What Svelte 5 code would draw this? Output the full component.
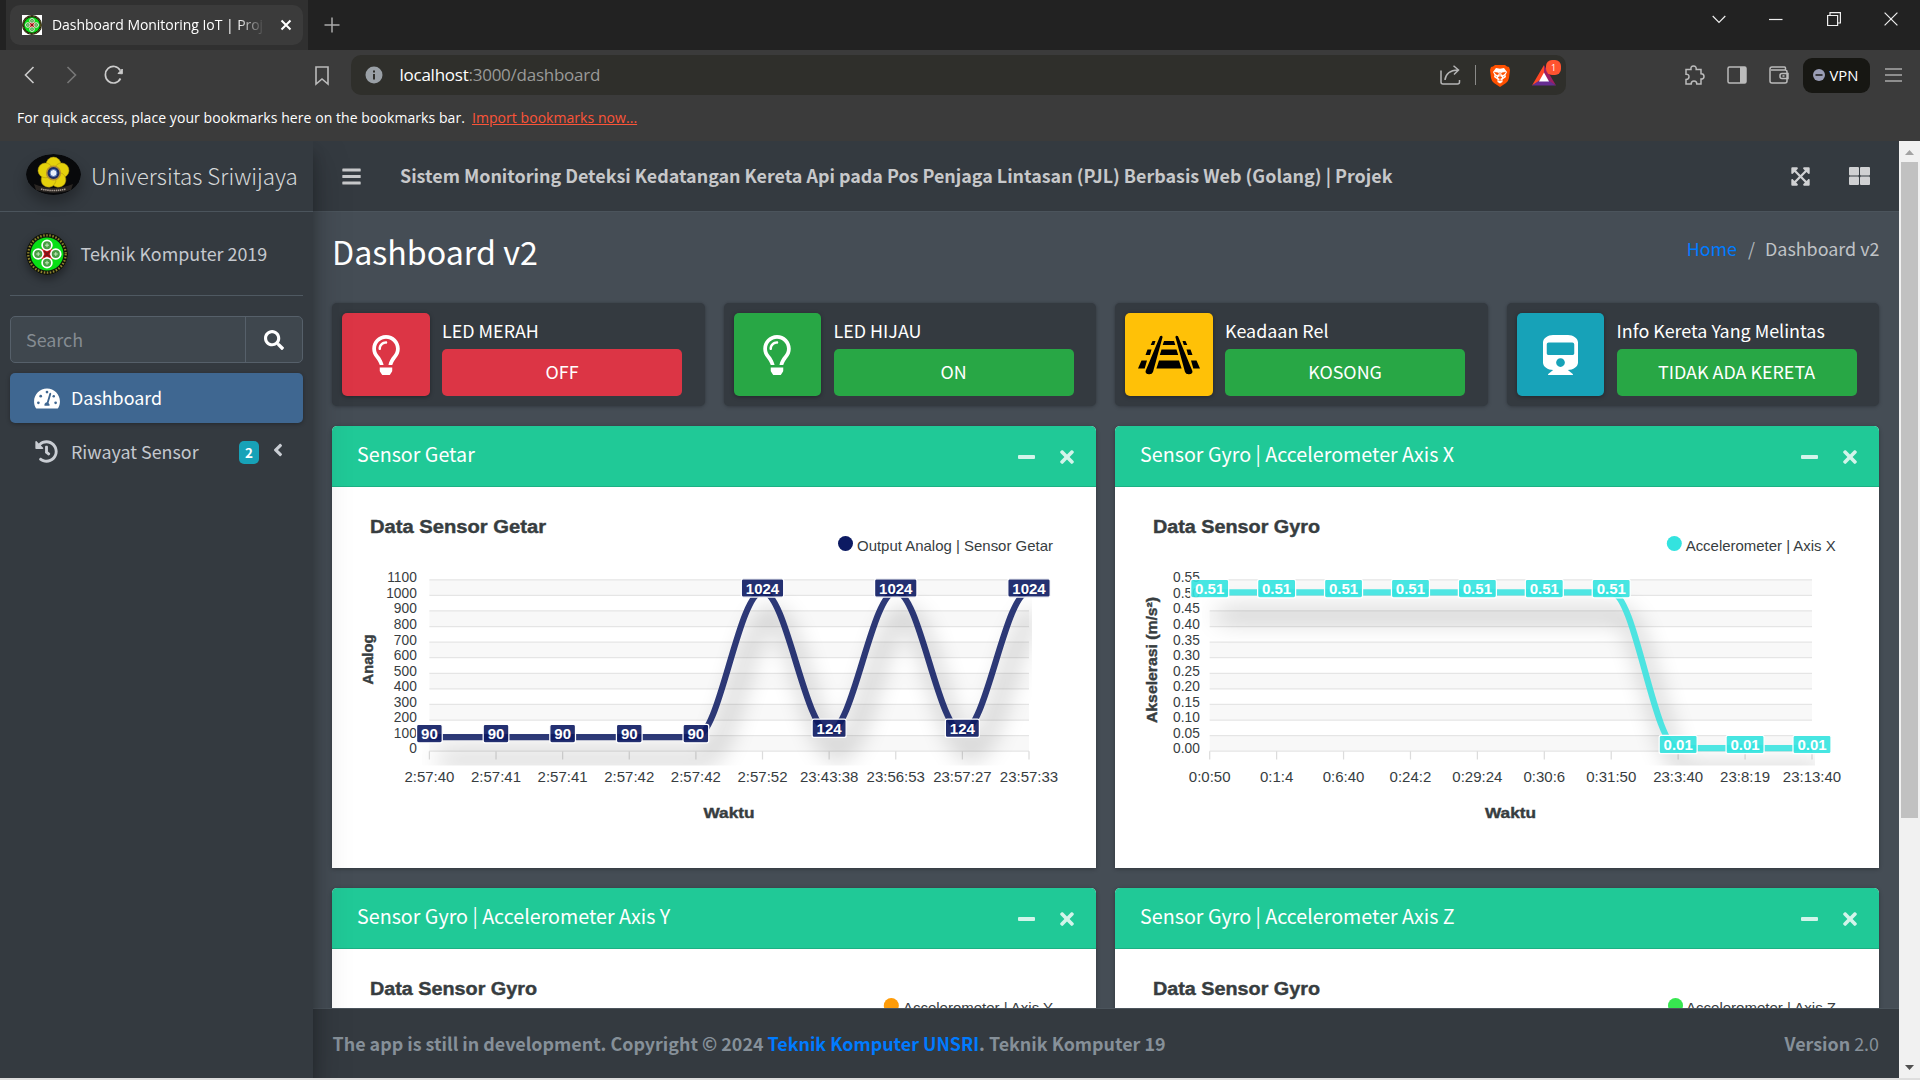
<script>
  const bulb = 'M176 80c-52.94 0-96 43.06-96 96 0 8.84 7.16 16 16 16s16-7.16 16-16c0-35.3 28.72-64 64-64 8.84 0 16-7.16 16-16s-7.16-16-16-16zM96.06 459.17c0 3.15.93 6.22 2.68 8.84l24.51 36.84c2.97 4.46 7.97 7.14 13.32 7.14h78.85c5.36 0 10.36-2.68 13.32-7.14l24.51-36.84c1.74-2.62 2.67-5.7 2.68-8.84l.05-43.18H96.02l.04 43.18zM176 0C73.72 0 0 82.97 0 176c0 44.37 16.45 84.85 43.56 115.78 16.64 18.99 42.74 58.8 52.42 92.16v.06h48v-.12c-.01-4.77-.72-9.51-2.15-14.07-5.59-17.81-22.82-64.77-62.17-109.67-20.54-23.43-31.52-53.15-31.61-84.14-.2-73.64 59.67-128 127.95-128 70.58 0 128 57.42 128 128 0 30.97-11.24 60.85-31.65 84.14-39.11 44.61-56.42 91.47-62.1 109.46a47.507 47.507 0 0 0-2.22 14.3v.1h48v-.05c9.68-33.37 35.78-73.18 52.42-92.16C335.55 260.85 352 220.37 352 176 352 78.8 273.2 0 176 0z';

  const boxes = [
    { label: 'LED MERAH', value: 'OFF', icon: 'bulb', tone: 'red', btn: 'red' },
    { label: 'LED HIJAU', value: 'ON', icon: 'bulb', tone: 'green', btn: 'green' },
    { label: 'Keadaan Rel', value: 'KOSONG', icon: 'rail', tone: 'yellow', btn: 'green' },
    { label: 'Info Kereta Yang Melintas', value: 'TIDAK ADA KERETA', icon: 'train', tone: 'cyan', btn: 'green' }
  ];

  // Vertical extent of the plotting area inside each chart.
  const top = 92.8;
  const bottom = 264.2;
  const step = (bottom - top) / 11;

  const charts = [
    {
      title: 'Sensor Getar', heading: 'Data Sensor Getar', legend: 'Output Analog | Sensor Getar',
      color: '#0c1a62', left: 97.4, right: 697, max: 1100, legendX: 525, dotX: 513.5, legendW: 196, headW: 176,
      axis: 'Analog', axisX: 40.7, axisY: 172.5, axisW: 50, waktuX: 397,
      ticks: ['1100', '1000', '900', '800', '700', '600', '500', '400', '300', '200', '100', '0'],
      labels: ['2:57:40', '2:57:41', '2:57:41', '2:57:42', '2:57:42', '2:57:52', '23:43:38', '23:56:53', '23:57:27', '23:57:33'],
      values: ['90', '90', '90', '90', '90', '1024', '124', '1024', '124', '1024']
    },
    {
      title: 'Sensor Gyro | Accelerometer Axis X', heading: 'Data Sensor Gyro', legend: 'Accelerometer | Axis X',
      color: '#33e3df', left: 94.7, right: 697, max: 0.55, legendX: 570.7, dotX: 559.3, legendW: 150, headW: 167,
      axis: 'Akselerasi (m/s²)', axisX: 42, axisY: 173, axisW: 126, waktuX: 395.5,
      ticks: ['0.55', '0.50', '0.45', '0.40', '0.35', '0.30', '0.25', '0.20', '0.15', '0.10', '0.05', '0.00'],
      labels: ['0:0:50', '0:1:4', '0:6:40', '0:24:2', '0:29:24', '0:30:6', '0:31:50', '23:3:40', '23:8:19', '23:13:40'],
      values: ['0.51', '0.51', '0.51', '0.51', '0.51', '0.51', '0.51', '0.01', '0.01', '0.01']
    },
    {
      title: 'Sensor Gyro | Accelerometer Axis Y', heading: 'Data Sensor Gyro', legend: 'Accelerometer | Axis Y',
      color: '#ff9c08', legendX: 571, dotX: 559.3, legendW: 150, headW: 167
    },
    {
      title: 'Sensor Gyro | Accelerometer Axis Z', heading: 'Data Sensor Gyro', legend: 'Accelerometer | Axis Z',
      color: '#37e650', legendX: 571, dotX: 560.5, legendW: 150, headW: 167
    }
  ];

  const px = (c, i) => c.left + ((c.right - c.left) * i) / 9;
  const py = (c, v) => bottom - (Number(v) / c.max) * (bottom - top);
  const boxW = (v) => (v.includes('.') ? 38 : v.length * 8.34 + 9);

  function curve(c) {
    let d = `M${px(c, 0)} ${py(c, c.values[0])}`;
    const h = ((c.right - c.left) / 9) * 0.36;
    for (let i = 1; i < c.values.length; i++) {
      const y0 = py(c, c.values[i - 1]);
      const y1 = py(c, c.values[i]);
      d += `C${px(c, i - 1) + h} ${y0} ${px(c, i) - h} ${y1} ${px(c, i)} ${y1}`;
    }
    return d;
  }
</script>

{#snippet campus()}
  <circle cx="21" cy="21" r="21" fill="#11140b" />
  <circle cx="21" cy="21" r="18.7" fill="none" stroke="#91852c" stroke-width="2.2" stroke-dasharray="1.5 1.6" />
  <circle cx="21" cy="21" r="16.5" fill="#08df16" />
  <path d="M21 12v18M12 21h18" stroke="#df2222" stroke-width="9" />
  {#each [[21, 12.2], [12.2, 21], [29.8, 21], [21, 29.8]] as [x, y]}
    <circle cx={x} cy={y} r="4.9" fill="#479d42" stroke="#fff" stroke-width="1.7" />
    <path d="M{x - 2} {y}h4M{x} {y - 2}v4" stroke="#c6e9bd" stroke-width="1" />
  {/each}
  <path d="M18 18l6 6M24 18l-6 6" stroke="#801317" stroke-width="2" />
{/snippet}

<div class="window">
  <div class="tabs">
    <div class="tabslot">
      <div class="tab">
        <svg class="fav" viewBox="0 0 42 42"><path fill="#fff" d="M0 0h42v42H0z" />{@render campus()}</svg>
        <span class="tabtitle">Dashboard Monitoring IoT | Proj</span>
        <svg width="12" height="12" viewBox="0 0 12 12"><path d="M1.5 1.5l9 9M10.500 1.500l-9 9" stroke="#fff" stroke-width="2" /></svg>
      </div>
    </div>
    <svg class="plus" width="16" height="16" viewBox="0 0 16 16"><path d="M8 .5v15M.5 8h15" stroke="#aaa" stroke-width="1.5" /></svg>
    <div class="wincontrols">
      <svg width="14" height="14" viewBox="0 0 14 14"><path d="M.7 4L7 10.300 13.300 4" /></svg>
      <svg width="14" height="14" viewBox="0 0 14 14"><path d="M0 7.500h13.500" /></svg>
      <svg width="14" height="14" viewBox="0 0 14 14"><path d="M.6 3.500h10v10h-10zM3 3.500V.6h10.400V11h-2.800" /></svg>
      <svg width="14" height="14" viewBox="0 0 14 14"><path d="M.6.600l12.800 12.800M13.400.600L.6 13.400" /></svg>
    </div>
  </div>

  <div class="toolbar">
    <svg class="back" width="11" height="18" viewBox="0 0 11 18"><path d="M9.500 1L1.500 9l8 8" fill="none" stroke="#ccc" stroke-width="1.6" /></svg>
    <svg class="fwd" width="11" height="18" viewBox="0 0 11 18"><path d="M1.500 1l8 8-8 8" fill="none" stroke="#777" stroke-width="1.600" /></svg>
    <svg class="reload" width="20" height="20" viewBox="0 0 20 20"><path d="M16.500 13.500A8 8.300 0 1 1 16.300 5.500" fill="none" stroke="#ccc" stroke-width="1.7" /><path d="M14 8.500l4.300.300L18.300 4z" fill="#ccc" stroke="#ccc" /></svg>
    <svg class="bm" width="14" height="20" viewBox="0 0 14 20"><path d="M1 1h12v17l-6-5-6 5z" fill="none" stroke="#bbb" stroke-width="1.600" /></svg>
    <div class="url">
      <svg width="18" height="18" viewBox="0 0 18 18"><circle cx="9" cy="9" r="8.500" fill="#9aa0a6" /><path d="M8 8h2v5.500H8zM8 4.500h2v2H8z" fill="#2f2f2b" /></svg>
      <span class="address"><b>localhost</b>:3000/dashboard</span>
      <svg class="share" width="21" height="20" viewBox="0 0 21 20"><path d="M1 5.500V17q0 2 2 2h14.500q2 0 2-2v-2M5 15q1-9.500 13-10M13.500.8L18.500 5l-4.500 4.500" fill="none" stroke="#b5b5b5" stroke-width="1.500" /></svg>
      <i class="sep"></i>
      <svg class="lion" width="20" height="23" viewBox="0 0 20 23"><path d="M5 1h10l2 1.500L19 3l1 3-1 8q-.5 3-3 5l-6 4-6-4q-2.500-2-3-5L0 6l1-3 2-.5z" fill="#ff5000" /><path d="M6 4l4 .8L14 4l3 4-1.500 3 .5 2-3.500 2.500L12.500 18 10 19.500 7.500 18l0-2.500L4 13l.5-2L3 8z" fill="#fff" /><path d="M4.500 8.200l4 .8-.5 1.800-2-.6zM15.500 8.200l-4 .8.5 1.800 2-.6zM10 8v4.500l2 1-2 1.300-2-1.300 2-1M7 13l-1.500-1M13 13l1.500-1M8.500 16.500l1.500-1 1.500 1" fill="#ff5000" stroke="#ff5000" stroke-width=".6" /></svg>
      <div class="rewards">
        <svg width="24" height="21" viewBox="0 0 24 21"><path d="M12 0L0 20.500l12-7z" fill="#ff4724" /><path d="M12 0l12 20.500-12-7z" fill="#9e1f63" /><path d="M0 20.500h24L16 15H8z" fill="#662d91" /><path d="M12 7.500l5 9H7z" fill="#fff" /></svg>
        <em>1</em>
      </div>
    </div>
    <div class="tools">
      <svg width="21" height="21" viewBox="0 0 21 21"><path d="M2 4.500h5Q6.500 1 9.500 1t2.700 3.500H17v4.300q3 0 3 2.600t-3 2.600v5h-4.200q0-3-2.800-3t-2.800 3H2v-4.500q3 0 3-2.700T2 9.200z" fill="none" stroke="#bbb" stroke-width="1.500" /></svg>
      <svg width="20" height="20" viewBox="0 0 20 20"><rect x="1" y="2" width="18" height="16" rx="1.500" fill="none" stroke="#bbb" stroke-width="1.500" /><path d="M13 2h6v16h-6z" fill="#bbb" /></svg>
      <svg width="20" height="20" viewBox="0 0 20 20"><path d="M16.500 5V3q0-1-1-1H3Q1 2 1 4v12q0 2 2 2h13q2 0 2-2V7q0-2-2-2H2M19 8.500h-6q-2 0-2 2v1q0 2 2 2h6zM13.500 11h2" fill="none" stroke="#bbb" stroke-width="1.500" /></svg>
      <div class="vpn"><svg width="12" height="12" viewBox="0 0 12 12"><circle cx="6" cy="6" r="6" fill="#9a9db5" /><path d="M2.500 6h7" stroke="#222" stroke-width="1.600" /></svg>VPN</div>
      <svg width="17" height="14" viewBox="0 0 17 14"><path d="M0 1h17M0 7h17M0 13h17" stroke="#aaa" stroke-width="1.500" /></svg>
    </div>
  </div>
  <div class="bookmarks"><span>For quick access, place your bookmarks here on the bookmarks bar.</span><u>Import bookmarks now...</u></div>

  <div class="page">
    <aside>
      <div class="brand">
        <svg class="logo" width="55" height="41" viewBox="0 0 55 41">
          <ellipse cx="27.500" cy="20.500" rx="27.500" ry="20.500" fill="#08090b" />
          {#each [0, 72, 144, 216, 288] as a}
            <ellipse cx="27.500" cy="10.500" rx="7.400" ry="7.400" fill="#e5d10b" stroke="#ad9610" stroke-width=".5" transform="rotate({a} 27.500 19)" />
          {/each}
          <circle cx="27.500" cy="19" r="6.800" fill="#1d2c66" stroke="#b68f32" stroke-width="1.600" />
          <circle cx="27.500" cy="19" r="3.500" fill="#e8eefa" stroke="#5879b9" />
          <path d="M8 30q19.500 8 39 0l-2 6q-17.500 6-35 0z" fill="#292522" />
          <path d="M15 35q12.500 3 25 0" fill="none" stroke="#a79b91" stroke-width="1.600" stroke-dasharray="1.500 .6" />
        </svg>
        <span>Universitas Sriwijaya</span>
      </div>
      <div class="user">
        <svg class="avatar" width="42" height="42" viewBox="0 0 42 42">{@render campus()}</svg>
        <span>Teknik Komputer 2019</span>
      </div>
      <div class="search">
        <span>Search</span>
        <div><svg width="20" height="20" viewBox="0 0 512 512"><path fill="#fff" d="M505 442.700L405.300 343c-4.500-4.500-10.600-7-17-7H372c27.600-35.300 44-79.700 44-128C416 93.100 322.900 0 208 0S0 93.100 0 208s93.100 208 208 208c48.300 0 92.700-16.400 128-44v16.300c0 6.400 2.500 12.500 7 17l99.700 99.700c9.400 9.400 24.600 9.400 33.900 0l28.300-28.300c9.400-9.400 9.400-24.600.1-34zM208 336c-70.700 0-128-57.200-128-128 0-70.700 57.200-128 128-128 70.700 0 128 57.200 128 128 0 70.700-57.200 128-128 128z" /></svg></div>
      </div>
      <div class="item active">
        <svg width="26" height="23" viewBox="0 0 576 512"><path fill="#fff" d="M288 32C128.940 32 0 160.940 0 320c0 52.800 14.250 102.260 39.060 144.800 5.610 9.620 16.300 15.200 27.440 15.200h443c11.140 0 21.830-5.580 27.440-15.200C561.750 422.260 576 372.800 576 320c0-159.060-128.940-288-288-288z" /><g fill="#3f6791"><circle cx="288" cy="112" r="30" /><circle cx="96" cy="352" r="30" /><circle cx="148" cy="204" r="30" /><circle cx="480" cy="352" r="30" /><circle cx="438" cy="204" r="28" /><path d="M362 130q24 6 20 28l-60 198q34 28 22 60H232q-12-44 24-66 10-8 28-10l58-194q6-18 20-16z" /></g></svg>
        <span>Dashboard</span>
      </div>
      <div class="item">
        <svg width="23" height="23" viewBox="0 0 512 512"><path fill="#c9cdd3" d="M504 255.531c.253 136.640-111.180 248.372-247.820 248.468-59.015.042-113.223-20.530-155.822-54.911-11.077-8.940-11.905-25.541-1.839-35.607l11.267-11.267c8.609-8.609 22.353-9.551 31.891-1.984C173.062 425.135 212.781 440 256 440c101.705 0 184-82.311 184-184 0-101.705-82.311-184-184-184-48.814 0-93.149 18.969-126.068 49.932l50.754 50.754c10.080 10.080 2.941 27.314-11.313 27.314H24c-8.837 0-16-7.163-16-16V38.627c0-14.254 17.234-21.393 27.314-11.314l49.372 49.372C129.209 34.136 189.552 8 256 8c136.810 0 247.747 110.780 248 247.531zm-180.912 78.784l9.823-12.630c8.138-10.463 6.253-25.542-4.210-33.679L288 256.349V152c0-13.255-10.745-24-24-24h-16c-13.255 0-24 10.745-24 24v135.651l65.409 50.874c10.463 8.137 25.541 6.253 33.679-4.210z" /></svg>
        <span>Riwayat Sensor</span>
        <b class="badge">2</b>
        <svg class="angle" width="10" height="20" viewBox="0 0 256 512"><path fill="#c9cdd3" d="M31.700 239l136-136c9.400-9.400 24.600-9.400 33.900 0l22.600 22.600c9.400 9.400 9.400 24.600 0 33.900L127.900 256l96.400 96.400c9.400 9.400 9.400 24.600 0 33.900L201.700 409c-9.400 9.400-24.600 9.400-33.900 0l-136-136c-9.500-9.400-9.500-24.600-.1-34z" /></svg>
      </div>
    </aside>

    <main>
      <nav>
        <svg width="19" height="21" viewBox="0 0 448 512"><g fill="#c7c8ca"><rect y="60" width="448" height="76" rx="16" /><rect y="218" width="448" height="76" rx="16" /><rect y="376" width="448" height="76" rx="16" /></g></svg>
        <strong>Sistem Monitoring Deteksi Kedatangan Kereta Api pada Pos Penjaga Lintasan (PJL) Berbasis Web (Golang) | Projek</strong>
        <svg class="expand" width="19" height="21" viewBox="0 0 448 512"><path fill="#d0d1d3" d="M448 344v112a23.940 23.940 0 0 1-24 24H312c-21.390 0-32.090-25.900-17-41l36.200-36.200L224 295.600 116.770 402.900 153 439c15.090 15.100 4.390 41-17 41H24a23.940 23.940 0 0 1-24-24V344c0-21.400 25.890-32.100 41-17l36.190 36.200L184.460 256 77.180 148.700 41 185c-15.100 15.100-41 4.400-41-17V56a23.940 23.940 0 0 1 24-24h112c21.390 0 32.090 25.900 17 41l-36.200 36.200L224 216.400l107.230-107.300L295 73c-15.090-15.100-4.390-41 17-41h112a23.940 23.940 0 0 1 24 24v112c0 21.400-25.890 32.100-41 17l-36.190-36.200L263.540 256l107.280 107.300L407 327.100c15.100-15.200 41-4.500 41 16.900z" /></svg>
        <svg width="21" height="18" viewBox="0 0 21 18"><g fill="#d0d1d3"><rect width="10" height="8.500" rx="1" /><rect x="11" width="10" height="8.500" rx="1" /><rect y="9.500" width="10" height="8.500" rx="1" /><rect x="11" y="9.500" width="10" height="8.500" rx="1" /></g></svg>
      </nav>

      <div class="content">
        <header>
          <h1>Dashboard v2</h1>
          <p><a href="#home">Home</a><i>/</i><span>Dashboard v2</span></p>
        </header>

        <section class="boxes">
          {#each boxes as b}
            <div class="box">
              <div class="icon {b.tone}">
                {#if b.icon === 'bulb'}
                  <svg width="28" height="40" viewBox="0 0 352 512"><path fill="#fff" d={bulb} /></svg>
                {:else if b.icon === 'rail'}
                  <svg width="62" height="40" viewBox="0 0 62 40"><path d="M22 1.200q2-1 2.600.800L15 37q-1 2.500-4 2.300-4-.3-3.400-3.300zM40 1.200q-2-1-2.600.800L47 37q1 2.500 4 2.300 4-.3 3.400-3.300zM26 6h10l1.300 4H24.700zM23.500 14.500h15l1.700 5.500H21.800zM21 25.500h20l2.600 8H18.400zM14.500 6h3l-1.300 4h-3.500zM47.500 6h-3l1.300 4h3.500zM9.500 14.500h4L12 20H7.500zM52.500 14.500h-4L50 20h4.500zM3.500 25.500H9l-2.300 8H0zM58.500 25.500H53l2.300 8H62z" /></svg>
                {:else}
                  <svg width="35" height="40" viewBox="0 0 448 512"><path fill="#fff" d="M448 96v256c0 51.815-61.624 96-130.022 96l62.980 49.721C386.905 502.417 383.562 512 376 512H72c-7.578 0-10.892-9.594-4.957-14.279L130.022 448C61.820 448 0 403.954 0 352V96C0 42.981 64 0 128 0h192c65 0 128 42.981 128 96zm-48 136V120c0-13.255-10.745-24-24-24H72c-13.255 0-24 10.745-24 24v112c0 13.255 10.745 24 24 24h304c13.255 0 24-10.745 24-24zm-176 64c-30.928 0-56 25.072-56 56s25.072 56 56 56 56-25.072 56-56-25.072-56-56-56z" /></svg>
                {/if}
              </div>
              <div class="info">
                <span>{b.label}</span>
                <div class="btn {b.btn}">{b.value}</div>
              </div>
            </div>
          {/each}
        </section>

        <section class="cards">
          {#each charts as c, n}
            <article>
              <div class="cardhead">
                <h3>{c.title}</h3>
                <svg width="17" height="20" viewBox="0 0 17 20"><rect y="8" width="17" height="4" rx="1" fill="#fff" opacity=".8" /></svg>
                <svg width="14" height="20" viewBox="0 0 352 512"><path fill="#fff" opacity=".8" d="M242.720 256l100.070-100.070c12.280-12.280 12.280-32.190 0-44.480l-22.240-22.240c-12.280-12.280-32.190-12.280-44.480 0L176 189.280 75.930 89.210c-12.280-12.280-32.190-12.280-44.480 0L9.210 111.450c-12.280 12.280-12.280 32.190 0 44.480L109.280 256 9.210 356.070c-12.280 12.280-12.280 32.190 0 44.480l22.240 22.240c12.280 12.280 32.200 12.280 44.480 0L176 322.720l100.070 100.070c12.280 12.280 32.200 12.280 44.480 0l22.240-22.240c12.280-12.280 12.280-32.190 0-44.480L242.720 256z" /></svg>
              </div>
              <svg class="chart" width="764" height="381" viewBox="0 0 764 381">
                <text class="black" x="38" y="46" font-size="17.500" textLength={c.headW} lengthAdjust="spacingAndGlyphs">{c.heading}</text>
                <circle cx={c.dotX} cy="56.500" r="7.500" fill={c.color} />
                <text x={c.legendX} y="64" font-size="15" textLength={c.legendW} lengthAdjust="spacingAndGlyphs">{c.legend}</text>
                {#if c.values}
                  <defs>
                    <filter id="shade{n}" filterUnits="userSpaceOnUse" x="0" y="0" width="764" height="381"><feGaussianBlur stdDeviation="12" /></filter>
                    <clipPath id="plot{n}"><rect x={c.left - 8} y="70" width={c.right - c.left + 11} height="208.500" /></clipPath>
                  </defs>
                  {#each c.ticks as t, i}
                    {#if i % 2 === 0 && i < 11}
                      <rect x={c.left} y={top + i * step} width={c.right - c.left} height={step} fill="#f8f8f8" />
                    {/if}
                    <line x1={c.left} x2={c.right} y1={top + i * step} y2={top + i * step} stroke="#e5e5e5" stroke-width="1.200" />
                    <text x="84.800" y={95.300 + i * 15.560} font-size="13.750" text-anchor="end">{t}</text>
                  {/each}
                  {#each c.labels as t, i}
                    <line x1={px(c, i)} x2={px(c, i)} y1={bottom} y2="272.500" stroke="#dcdcdc" stroke-width="1.250" />
                    <text x={px(c, i)} y="295" font-size="15" text-anchor="middle">{t}</text>
                  {/each}
                  <g clip-path="url(#plot{n})">
                    <path d={curve(c)} transform="translate(8.750 22.500)" fill="none" stroke="#000" stroke-width="8" opacity=".34" filter="url(#shade{n})" />
                    <path d={curve(c)} fill="none" stroke={c.color} stroke-width="6.250" opacity=".86" />
                  </g>
                  {#each c.values as v, i}
                    <rect x={px(c, i) - boxW(v) / 2} y={py(c, v) - 12.800} width={boxW(v)} height="18.400" rx="2" fill={c.color} fill-opacity=".9" stroke="#fff" stroke-width="1.250" />
                    <text class="val" x={px(c, i)} y={py(c, v) + 1.900} font-size="15" text-anchor="middle">{v}</text>
                  {/each}
                  <text class="black" font-size="14.500" textLength={c.axisW} lengthAdjust="spacingAndGlyphs" text-anchor="middle" transform="translate({c.axisX} {c.axisY}) rotate(-90)">{c.axis}</text>
                  <text class="black" x={c.waktuX} y="331" font-size="14.500" text-anchor="middle" textLength="51" lengthAdjust="spacingAndGlyphs">Waktu</text>
                {/if}
              </svg>
            </article>
          {/each}
        </section>
      </div>

      <footer>
        <strong>The app is still in development. Copyright © 2024 <a href="#unsri">Teknik Komputer UNSRI</a>. Teknik Komputer 19</strong>
        <span><b>Version</b> 2.0</span>
      </footer>
    </main>

    <div class="scroll">
      <svg width="21" height="21" viewBox="0 0 21 21"><path d="M6 14l4.500-5 4.500 5z" fill="#a3a3a3" /></svg>
      <div class="thumb"></div>
      <svg class="down" width="21" height="21" viewBox="0 0 21 21"><path d="M6 8l4.500 5L15 8z" fill="#505050" /></svg>
    </div>
  </div>
  <div class="edge"></div>
</div>

<style>
  :global(body) { margin: 0; overflow: hidden; }
  * { box-sizing: border-box; }
  .window { width: 1920px; height: 1080px; display: flex; flex-direction: column; overflow: hidden; font-family: "Noto Sans CJK JP", "Noto Sans", sans-serif; font-size: 17.900px; line-height: 30px; white-space: nowrap; }
  svg { display: block; flex: none; }
  em, i { font-style: normal; }
  .tabs, .toolbar, .bookmarks { font-family: "Open Sans", "Noto Sans", sans-serif; font-size: 14px; color: #fff; flex: none; }
  .tabs { height: 50px; background: #222; display: flex; align-items: center; }
  .tabslot { margin-left: 6px; width: 302px; height: 50px; background: #303030; padding: 5px 5px 5px 4px; }
  .tab { height: 40px; border-radius: 10px; background: #3b3b3b; display: flex; align-items: center; padding: 0 11px 0 12px; }
  .fav { width: 20px; height: 20px; margin-right: 10px; }
  .tabtitle { width: 213px; overflow: hidden; margin-right: auto; letter-spacing: -.05px; mask-image: linear-gradient(90deg, #000 185px, transparent 213px); }
  .plus { margin-left: 16px; }
  .wincontrols { margin-left: auto; display: flex; gap: 43.500px; padding: 0 22px 12px 0; }
  .wincontrols path { fill: none; stroke: #eee; stroke-width: 1.200; }
  .toolbar { height: 50px; background: #3b3b3b; display: flex; align-items: center; }
  .back { margin-left: 24px; }
  .fwd { margin-left: 31px; }
  .reload { margin-left: 27px; }
  .bm { margin: 2px 0 0 191px; }
  .url { margin-left: 22px; width: 1215px; height: 40px; border-radius: 10px; background: #2f2f2b; display: flex; align-items: center; padding: 0 10px 0 13.500px; }
  .address { margin-left: 17px; font-size: 17px; color: #9a9a98; letter-spacing: -.250px; }
  .address b { font-weight: 400; color: #fff; }
  .share { margin-left: auto; }
  .sep { width: 1px; height: 20px; background: #8a8a88; margin: 0 14px; }
  .rewards { position: relative; margin-left: 22px; }
  .rewards em { position: absolute; left: 14px; top: -5px; width: 15px; height: 15px; border-radius: 6px; background: #ff5330; font-size: 9px; line-height: 15px; text-align: center; }
  .tools { margin-left: auto; margin-right: 18.500px; display: flex; align-items: center; }
  .tools > svg { margin-right: 22px; }
  .tools > svg:nth-child(3) { margin-right: 14px; }
  .tools > svg:last-child { margin: 0; }
  .vpn { width: 67px; height: 35px; border-radius: 9px; background: #171713; display: flex; align-items: center; padding-left: 10px; gap: 5px; margin-right: 15px; font-size: 14.800px; }
  .bookmarks { height: 41px; background: #3b3b3b; padding: 3px 0 0 17px; display: flex; letter-spacing: .070px; }
  .bookmarks u { margin-left: 7px; color: #fb5438; letter-spacing: .050px; }
  .page { flex: 1; display: flex; min-height: 0; background: #454d55; }
  aside { width: 313px; flex: none; background: #343a40; position: relative; z-index: 2; box-shadow: 0 17px 35px rgba(0, 0, 0, .25), 0 12px 12px rgba(0, 0, 0, .22); clip-path: inset(0 -60px 0 0); color: #c5c8ce; }
  .brand { height: 71px; border-bottom: 1px solid #4b545c; display: flex; align-items: center; padding: 0 0 2px 26px; font-size: 22.400px; font-weight: 300; color: #d6d8d9; }
  .brand span { margin-left: 10px; }
  .logo { margin-bottom: 1px; border-radius: 50%; box-shadow: 0 8px 14px rgba(0, 0, 0, .3); }
  .user { height: 84px; margin: 0 10px 20px; border-bottom: 1px solid #4f5962; display: flex; align-items: center; padding-left: 16px; }
  .user span { margin: 0 0 2px 12.500px; }
  .avatar { border-radius: 50%; box-shadow: 0 4px 8px rgba(0, 0, 0, .4); }
  .search { margin: 0 10px 10px; height: 47px; border: 1px solid #56606a; border-radius: 5px; background: #3f474e; display: flex; align-items: center; color: #858c92; padding-left: 15px; }
  .search span { margin-bottom: 2px; }
  .search div { margin-left: auto; width: 57px; height: 45px; border-left: 1px solid #56606a; display: grid; place-items: center; }
  .item { height: 50px; margin: 0 10px 4px; border-radius: 5px; display: flex; align-items: center; padding-left: 24px; }
  .item:not(.active) { padding-left: 25px; }
  .item:not(.active) > svg:first-child { margin-bottom: 2px; }
  .item span { margin: 0 0 2px 11px; }
  .item:not(.active) span { margin-left: 13px; }
  .item.active { background: #3f6791; color: #fff; box-shadow: 0 1px 4px rgba(0, 0, 0, .3); }
  .badge { margin-left: auto; width: 20px; height: 23px; border-radius: 5px; background: #17a2b8; color: #fff; font-size: 13.400px; line-height: 23px; text-align: center; }
  .angle { margin: 0 20px 4px 14px; }
  main { flex: 1; min-width: 0; display: flex; flex-direction: column; background: #454d55; }
  nav { height: 71px; flex: none; background: #343a40; border-bottom: 1px solid #4b545c; display: flex; align-items: center; padding: 0 29px; }
  nav strong { margin: 0 0 2px 39px; color: #c7c8ca; }
  .expand { margin: 0 39px 0 auto; }
  .content { flex: 1; min-height: 0; overflow: hidden; padding: 0 19.600px 0 19px; }
  header { height: 91px; padding-top: 15px; display: flex; justify-content: space-between; color: #fff; }
  h1 { margin: 0; font-size: 32.200px; line-height: 48px; font-weight: 400; }
  header p { margin: 6px 0 0; color: #c0c3c6; }
  header p i { margin: 0 10px 0 11px; color: #b0b5ba; }
  a { color: #007bff; text-decoration: none; }
  .boxes { display: grid; grid-template-columns: repeat(4, 1fr); gap: 18.750px; margin-bottom: 20px; }
  .box { height: 103px; border-radius: 5px; background: #343a40; padding: 10px; display: flex; box-shadow: 0 0 2px rgba(0, 0, 0, .15), 0 1px 4px rgba(0, 0, 0, .2); color: #fff; }
  .icon { width: 87.500px; height: 83px; border-radius: 5px; display: grid; place-items: center; box-shadow: 0 1px 4px rgba(0, 0, 0, .35); }
  .info { margin-left: 12.500px; padding-top: 2px; width: 240px; }
  .info span { display: block; line-height: 30px; height: 34px; }
  .btn { height: 47px; line-height: 45px; border-radius: 5px; text-align: center; }
  .red { background: #dc3545; }
  .green { background: #28a745; }
  .yellow { background: #ffc107; }
  .cyan { background: #17a2b8; }
  .cards { display: grid; grid-template-columns: 1fr 1fr; gap: 20px 18.750px; }
  article { height: 442px; background: #fff; border-radius: 5px 5px 0 0; box-shadow: 0 1px 4px rgba(0, 0, 0, .3); }
  .cardhead { height: 61px; background: #20c997; border-bottom: 1px solid #1cb084; border-radius: 5px 5px 0 0; display: flex; align-items: center; color: #fff; padding: 0 22px 0 25px; }
  h3 { margin: 0 auto 5px 0; font-size: 19.700px; font-weight: 400; }
  .cardhead svg { margin-left: 25px; margin-top: 2px; }
  .chart { font-family: "Liberation Sans", Arial, sans-serif; fill: #373d3f; }
  .black { font-weight: 700; stroke: #373d3f; stroke-width: .4px; }
  .val { font-weight: 700; fill: #fff; }
  footer { height: 70px; flex: none; background: #343a40; border-top: 1px solid #4b545c; color: #869099; display: flex; justify-content: space-between; align-items: center; padding: 0 20px 2px 19.500px; }
  .scroll { width: 21px; flex: none; background: #f1f1f1; display: flex; flex-direction: column; align-items: center; }
  .thumb { width: 17px; height: 656px; background: #c1c1c1; }
  .down { margin-top: auto; }
  .edge { height: 2px; flex: none; background: #dedede; }
</style>
